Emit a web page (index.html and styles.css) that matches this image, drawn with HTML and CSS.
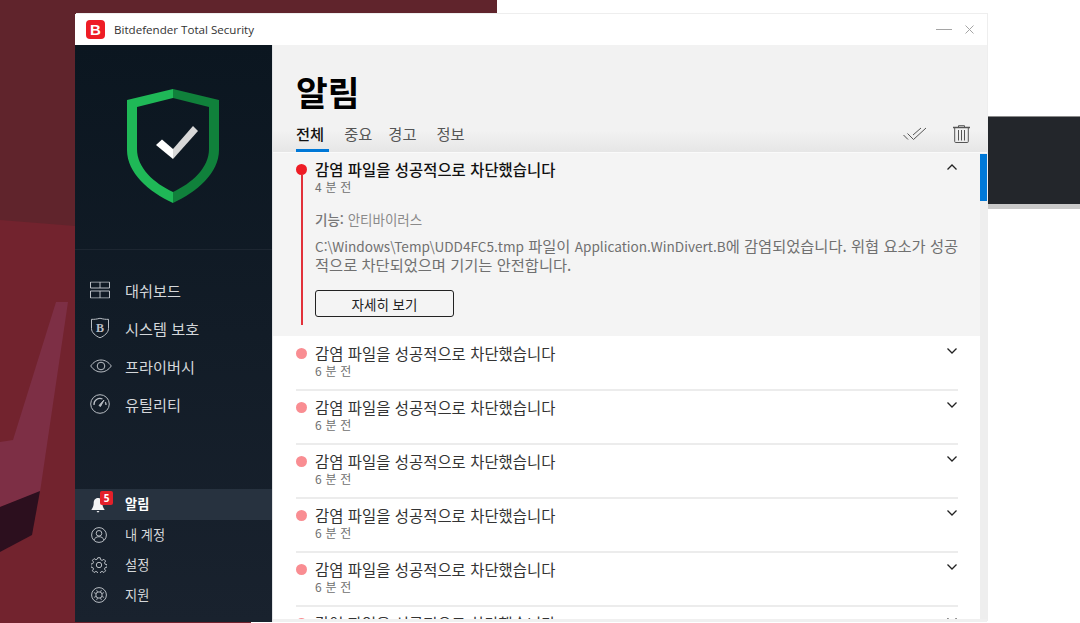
FILE: index.html
```html
<!DOCTYPE html>
<html lang="ko">
<head>
    <meta charset="UTF-8">
    <meta name="viewport" content="width=device-width, initial-scale=1.0">
    <title>Bitdefender Total Security</title>
    <link rel="stylesheet" href="styles.css">
</head>
<body>
    <!-- desktop behind the window -->
    <svg class="desktop" viewBox="0 0 1080 623" width="1080" height="623">
        <rect x="0" y="0" width="497" height="623" fill="#72232e"/>
        <polygon points="0,0 497,0 497,14 75,14 75,226 0,220" fill="#60242c"/>
        <polygon points="56,302 68,302 40,492 0,507 0,442 13,440" fill="#7d2f45"/>
        <polygon points="40,491 32,535 0,552 0,507" fill="#2c0f1e"/>
        <rect x="251" y="622" width="246" height="1" fill="#fff"/>
        <rect x="988" y="116" width="92" height="1" fill="#8a8a8a"/>
        <rect x="988" y="117" width="92" height="87" fill="#23262b"/>
        <rect x="988" y="204" width="92" height="5" fill="#c9c9c9"/>
    </svg>

    <div class="window">
        <div class="titlebar">
            <span class="app-logo">B</span>
            <span class="app-name">Bitdefender Total Security</span>
            <span class="win-min"></span>
            <svg class="win-close" viewBox="0 0 9 9" width="9" height="9"><path d="M.5.5l8 8M8.5.5l-8 8" stroke="#a5a5a5" fill="none"/></svg>
        </div>

        <div class="app-body">
            <div class="sidebar">
                <div class="status">
                    <svg viewBox="0 0 92 114" width="92" height="114">
                        <path d="M46 0L0 11V61C0 84 22 103 46 114V103C27 94 10 79 10 60V18L46 9Z" fill="#1fb857"/>
                        <path d="M46 0L92 11V61C92 84 70 103 46 114V103C65 94 82 79 82 60V18L46 9Z" fill="#10813b"/>
                        <path d="M29 56L35 50.500 46 60V70Z" fill="#fff"/>
                        <path d="M46 60L66 37 71 42 46 70Z" fill="#d8d8d8"/>
                    </svg>
                </div>

                <div class="nav-main">
                    <a class="nav-item">
                        <svg class="nav-icon" viewBox="0 0 20 17" width="20" height="17" fill="none" stroke="#b9bec4"><path d="M.5.500h19v6H.5zM10 .5v6M.5 9.500h19v7H.5zM10 9.500v7"/></svg>
                        대쉬보드
                    </a>
                    <a class="nav-item">
                        <svg class="nav-icon" viewBox="0 0 20 21" width="20" height="21" fill="none" stroke="#b9bec4"><path d="M10 .7C7 1.700 4 2 1.500 1.800V11c0 4 4 7.500 8.500 9.300 4.500-1.800 8.500-5.300 8.500-9.300V1.800C16 2 13 1.700 10 .7z"/><text x="10" y="14.500" class="shield-b">B</text></svg>
                        시스템 보호
                    </a>
                    <a class="nav-item">
                        <svg class="nav-icon" viewBox="0 0 22 14" width="22" height="14" fill="none" stroke="#b9bec4"><path d="M.7 7C3.500 3 7 1 11 1s7.500 2 10.300 6c-2.800 4-6.300 6-10.300 6S3.500 11 .7 7z"/><circle cx="11" cy="7" r="3.800"/></svg>
                        프라이버시
                    </a>
                    <a class="nav-item">
                        <svg class="nav-icon" viewBox="0 0 20 20" width="20" height="20" fill="none" stroke="#b9bec4"><circle cx="10" cy="10" r="9.300"/><path d="M4 11a6 6 0 0 1 8.500-6M16 11c0-1-.2-2-.7-2.800" stroke-width="1.300"/><path d="M9 11.500l5-5.500-3.500 6.500z" fill="#b9bec4"/></svg>
                        유틸리티
                    </a>
                </div>

                <div class="nav-bottom">
                    <a class="nav-item small active">
                        <span class="bell">
                            <svg viewBox="0 0 14 16" width="14" height="16"><path d="M7 1C4 1 2.700 3.500 2.700 6c0 3-1 5-2.200 6.500v.5h13v-.5C12.300 11 11.300 9 11.300 6 11.300 3.500 10 1 7 1zM5.500 14h3L7 15.800z" fill="#f2f3f4"/></svg>
                            <span class="badge">5</span>
                        </span>
                        알림
                    </a>
                    <a class="nav-item small">
                        <svg class="nav-icon" viewBox="0 0 16 16" width="16" height="16" fill="none" stroke="#b9bec4"><circle cx="8" cy="8" r="7.400"/><circle cx="8" cy="6.300" r="2.800"/><path d="M3 13c.8-2.200 2.500-3.300 5-3.300s4.200 1.100 5 3.300"/></svg>
                        내 계정
                    </a>
                    <a class="nav-item small">
                        <svg class="nav-icon" viewBox="0 0 16 16" width="16" height="16" fill="none" stroke="#b9bec4"><circle cx="8" cy="8" r="2.700"/><path d="M6.800.7h2.400l.4 2 1.500.7 1.800-1.100 1.700 1.700-1.100 1.800.7 1.500 2 .4v2.400l-2 .4-.7 1.500 1.100 1.800-1.700 1.700-1.800-1.100-1.500.7-.4 2H6.800l-.4-2-1.500-.7-1.800 1.100-1.700-1.700 1.100-1.800-.7-1.500-2-.4V7l2-.4.700-1.500-1.100-1.800 1.700-1.700 1.800 1.100 1.500-.7z"/></svg>
                        설정
                    </a>
                    <a class="nav-item small">
                        <svg class="nav-icon" viewBox="0 0 16 16" width="16" height="16" fill="none" stroke="#b9bec4"><circle cx="8" cy="8" r="7.400"/><circle cx="8" cy="8" r="3.200"/><path d="M5.500 2.900L6.700 5.200M2.900 5.500L5.200 6.700M10.500 2.900L9.300 5.200M13.100 5.500L10.800 6.700M5.500 13.100L6.700 10.800M2.900 10.500L5.200 9.300M10.500 13.100L9.300 10.800M13.100 10.500L10.800 9.300" stroke-width=".8"/></svg>
                        지원
                    </a>
                </div>
            </div>

            <div class="main">
                <div class="page-head">
                    <h1>알림</h1>
                    <div class="tab-bar">
                        <span class="tab active">전체</span>
                        <span class="tab">중요</span>
                        <span class="tab">경고</span>
                        <span class="tab tab-last">정보</span>
                        <span class="tab-actions">
                            <svg viewBox="0 0 24 14" width="24" height="14" fill="none" stroke="#555"><path d="M.5 8l4.500 4.500M4.500 6.500l6 6L23 1M10 8l8-7"/></svg>
                            <svg viewBox="0 0 17 18" width="17" height="18" fill="none" stroke="#555"><path d="M0 2.500h17" stroke-width="1.500"/><path d="M5.500 2V.7h6V2"/><path d="M1.700 3v13.500a1 1 0 0 0 1 1h11.600a1 1 0 0 0 1-1V3M5.500 5v10.500M8.500 5v10.500M11.500 5v10.500"/></svg>
                        </span>
                    </div>
                </div>

                <div class="list-wrap">
                    <div class="list">
                        <div class="alert open">
                            <div class="marker">
                                <span class="dot"></span>
                                <span class="line"></span>
                            </div>
                            <div class="alert-text">
                                <div class="alert-title">감염 파일을 성공적으로 차단했습니다</div>
                                <div class="alert-time">4 분 전</div>
                                <div class="feature"><strong>기능:</strong> 안티바이러스</div>
                                <p class="desc"><span class="latin">C:\Windows\Temp\UDD4FC5.tmp</span> 파일이 <span class="latin">Application.WinDivert.B</span>에 감염되었습니다. 위협 요소가 성공<br>적으로 차단되었으며 기기는 안전합니다.</p>
                                <button class="more-btn">자세히 보기</button>
                            </div>
                            <svg class="chevron" viewBox="0 0 10 6" width="10" height="6"><path d="M.5 5.500L5 1l4.500 4.500"/></svg>
                        </div>

                        <div class="alert">
                            <div class="marker"><span class="dot"></span></div>
                            <div class="alert-text">
                                <div class="alert-title">감염 파일을 성공적으로 차단했습니다</div>
                                <div class="alert-time">6 분 전</div>
                            </div>
                            <svg class="chevron" viewBox="0 0 10 6" width="10" height="6"><path d="M.5.500L5 5 9.500.5"/></svg>
                        </div>
                        <div class="alert">
                            <div class="marker"><span class="dot"></span></div>
                            <div class="alert-text">
                                <div class="alert-title">감염 파일을 성공적으로 차단했습니다</div>
                                <div class="alert-time">6 분 전</div>
                            </div>
                            <svg class="chevron" viewBox="0 0 10 6" width="10" height="6"><path d="M.5.500L5 5 9.500.5"/></svg>
                        </div>
                        <div class="alert">
                            <div class="marker"><span class="dot"></span></div>
                            <div class="alert-text">
                                <div class="alert-title">감염 파일을 성공적으로 차단했습니다</div>
                                <div class="alert-time">6 분 전</div>
                            </div>
                            <svg class="chevron" viewBox="0 0 10 6" width="10" height="6"><path d="M.5.500L5 5 9.500.5"/></svg>
                        </div>
                        <div class="alert">
                            <div class="marker"><span class="dot"></span></div>
                            <div class="alert-text">
                                <div class="alert-title">감염 파일을 성공적으로 차단했습니다</div>
                                <div class="alert-time">6 분 전</div>
                            </div>
                            <svg class="chevron" viewBox="0 0 10 6" width="10" height="6"><path d="M.5.500L5 5 9.500.5"/></svg>
                        </div>
                        <div class="alert">
                            <div class="marker"><span class="dot"></span></div>
                            <div class="alert-text">
                                <div class="alert-title">감염 파일을 성공적으로 차단했습니다</div>
                                <div class="alert-time">6 분 전</div>
                            </div>
                            <svg class="chevron" viewBox="0 0 10 6" width="10" height="6"><path d="M.5.500L5 5 9.500.5"/></svg>
                        </div>
                        <div class="alert">
                            <div class="marker"><span class="dot"></span></div>
                            <div class="alert-text">
                                <div class="alert-title">감염 파일을 성공적으로 차단했습니다</div>
                                <div class="alert-time">6 분 전</div>
                            </div>
                            <svg class="chevron" viewBox="0 0 10 6" width="10" height="6"><path d="M.5.500L5 5 9.500.5"/></svg>
                        </div>
                    </div>
                    <div class="scrollbar"><div class="thumb"></div></div>
                </div>
            </div>
        </div>
    </div>
</body>
</html>
```

FILE: styles.css
```css
* {
    box-sizing: border-box;
}

html, body {
    margin: 0;
    height: 623px;
    overflow: hidden;
}

body {
    position: relative;
    background-color: #fff;
    font-family: "Open Sans", "Noto Sans CJK KR", sans-serif;
}

.desktop {
    position: absolute;
    left: 0;
    top: 0;
}

.window {
    position: absolute;
    left: 75px;
    top: 14px;
    width: 912px;
    height: 608px;
    display: flex;
    flex-direction: column;
    background-color: #fff;
    box-shadow: 1px -1px 0 #eee;
}

/* title bar */
.titlebar {
    height: 31px;
    display: flex;
    align-items: center;
    padding-left: 11px;
    background-color: #fff;
}

.app-logo {
    width: 19px;
    height: 19px;
    border-radius: 4px;
    background-color: #ee1c25;
    color: #fff;
    font-family: "Liberation Sans", sans-serif;
    font-size: 15px;
    font-weight: bold;
    line-height: 19px;
    text-align: center;
}

.app-name {
    margin-left: 9px;
    font-size: 11.600px;
    color: #333;
}

.win-min {
    width: 16px;
    height: 1px;
    margin-left: auto;
    background-color: #a5a5a5;
}

.win-close {
    margin: 0 13px 0 13px;
}

.app-body {
    flex: 1;
    display: flex;
    min-height: 0;
}

/* left menu */
.sidebar {
    width: 198px;
    display: flex;
    flex-direction: column;
    background: linear-gradient(#0b1620, #19222e);
    border-right: 1px solid #e2e4e6;
}

.status {
    height: 205px;
    display: flex;
    justify-content: center;
    padding-top: 44px;
    padding-right: 1px;
    border-bottom: 1px solid #1d2631;
}

.nav-main {
    padding-top: 21px;
}

.nav-bottom {
    margin-top: auto;
    padding-bottom: 12px;
}

.nav-item {
    position: relative;
    height: 38px;
    display: flex;
    align-items: center;
    padding-left: 50px;
    font-family: "Noto Sans CJK KR", sans-serif;
    font-size: 15.200px;
    color: #d4d7da;
}

.nav-icon {
    position: absolute;
    left: 15px;
    top: 50%;
    transform: translateY(-50%);
}

.shield-b {
    font-family: "Liberation Serif", serif;
    font-size: 12px;
    font-weight: bold;
    text-anchor: middle;
    fill: #b9bec4;
    stroke: none;
}

.nav-item.small {
    height: 30px;
    padding-bottom: 1px;
    font-size: 13.200px;
}

.nav-item.small .nav-icon {
    left: 16px;
}

.nav-item.active {
    height: 31px;
    padding-bottom: 2px;
    background-color: #27323f;
    color: #fff;
    font-weight: bold;
}

.bell {
    position: absolute;
    left: 16px;
    top: 8px;
    width: 14px;
    height: 16px;
}

.bell svg {
    display: block;
}

.badge {
    position: absolute;
    left: 9px;
    top: -6px;
    width: 13px;
    height: 14px;
    border-radius: 2px;
    background-color: #e3202a;
    color: #fff;
    font-family: "Open Sans", sans-serif;
    font-size: 10px;
    font-weight: bold;
    line-height: 14px;
    text-align: center;
}

/* page header */
.main {
    flex: 1;
    min-width: 0;
    display: flex;
    flex-direction: column;
    background-color: #f0f0f0;
    font-family: "Noto Sans CJK KR", sans-serif;
}

.page-head {
    height: 107px;
    padding: 23px 0 0 23px;
    background: linear-gradient(#f2f2f2 80%, #e6e6e6);
}

h1 {
    margin: 0;
    font-size: 34.500px;
    font-weight: bold;
    line-height: 46px;
    color: #000;
}

.tab-bar {
    display: flex;
    align-items: flex-start;
    gap: 16px;
    margin-top: 7px;
}

.tab {
    height: 31px;
    font-size: 15.300px;
    line-height: 25px;
    color: #555;
}

.tab.active {
    margin-right: -1px;
    padding-right: 5px;
    color: #111;
    font-weight: 500;
    border-bottom: 3px solid #0078d7;
}

.tab-last {
    margin-left: 4px;
}

.tab-actions {
    display: flex;
    align-items: center;
    gap: 26px;
    margin-left: auto;
    margin-right: 17px;
    height: 26px;
}

/* notifications */
.list-wrap {
    flex: 1;
    min-height: 0;
    display: flex;
    margin-bottom: 3px;
    border-top: 1px solid #fafafa;
}

.list {
    flex: 1;
    min-width: 0;
    overflow: hidden;
    background-color: #fff;
}

.alert {
    height: 54px;
    display: flex;
    margin: 0 22px 0 23px;
    padding-top: 7px;
    border-bottom: 2px solid #ececec;
}

.alert.open {
    height: 183px;
    margin: 0 0 1px;
    padding: 7px 22px 11px 23px;
    border-bottom: 0;
    background-color: #f4f4f4;
}

.marker {
    width: 11px;
    flex-shrink: 0;
    display: flex;
    flex-direction: column;
    align-items: center;
    padding-top: 4px;
}

.dot {
    width: 11px;
    height: 11px;
    flex-shrink: 0;
    border-radius: 50%;
    background-color: #f98d92;
}

.open .dot {
    background-color: #ee1c25;
}

.line {
    flex: 1;
    width: 2px;
    background-color: #e2313a;
}

.alert-text {
    flex: 1;
    min-width: 0;
    margin-left: 8px;
}

.alert-title {
    font-size: 15.400px;
    line-height: 19px;
    letter-spacing: 0.05px;
    color: #333;
}

.open .alert-title {
    font-weight: 500;
    color: #111;
}

.alert-time {
    font-size: 12px;
    line-height: 16px;
    letter-spacing: 0.2px;
    color: #707070;
}

.feature {
    margin-top: 14px;
    font-size: 13.500px;
    line-height: 20px;
    color: #8a8a8a;
}

.feature strong {
    font-weight: 500;
    color: #777;
}

.desc {
    margin: 7px 0 0;
    font-size: 15.300px;
    line-height: 19px;
    color: #707070;
    white-space: nowrap;
}

.latin {
    font-size: 13.600px;
    line-height: 1;
}

.more-btn {
    display: block;
    width: 139px;
    height: 27px;
    margin-top: 16px;
    padding: 0;
    background-color: transparent;
    border: 1px solid #222;
    border-radius: 3px;
    font-family: inherit;
    font-size: 13.500px;
    color: #222;
}

.chevron {
    flex-shrink: 0;
    margin: 4px 1px 0 0;
    fill: none;
    stroke: #222;
    stroke-width: 1.300;
}

.scrollbar {
    width: 7px;
    flex-shrink: 0;
    background-color: #eee;
}

.thumb {
    height: 47px;
    margin-top: 1px;
    background-color: #0078d7;
}
```
